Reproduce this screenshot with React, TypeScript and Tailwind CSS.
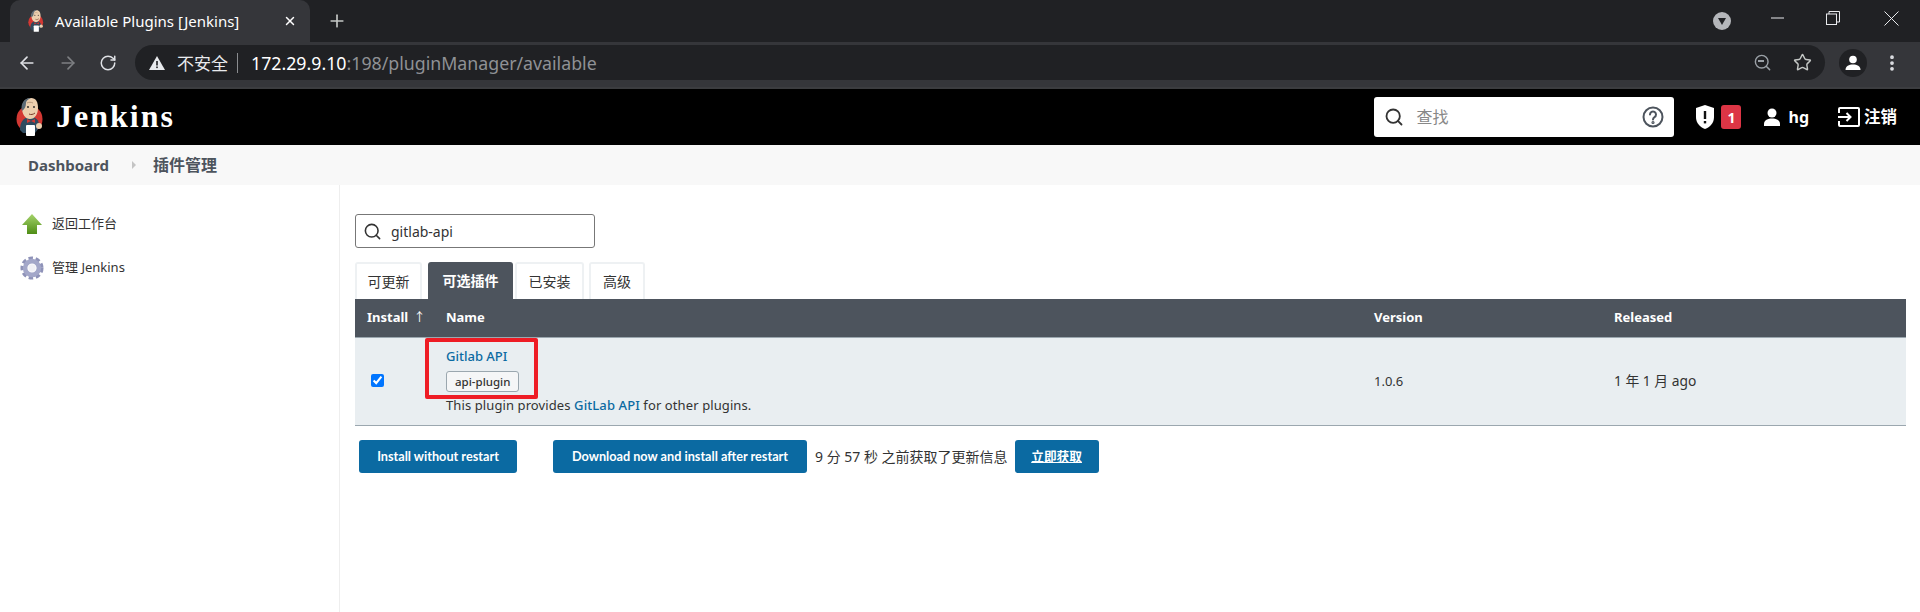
import { ArrowLeft, ArrowRight, RotateCw, Star, Search, X, Plus, EllipsisVertical } from "lucide-react";
import type { ReactNode } from "react";

const cjk = "font-['Noto_Sans','Noto_Sans_CJK_SC',sans-serif]";

function JenkinsLogo({ className = "" }: { className?: string }) {
  return (
    <svg viewBox="0 0 28 38" className={className}>
      <ellipse cx="13.500" cy="21" rx="13" ry="13.500" fill="#d33833" />
      <path d="M4 32c0-8 3-12 9-13s10 3 10 8v3l-4 5H7z" fill="#2f4b5f" />
      <path d="M6 10C6 4 10 0 15 0s7 4 7 10c0 6-3 11-8 11S6 16 6 10z" fill="#eccfae" />
      <path d="M6 13C4 6 9-1 15 0c-3 1-5 3-5 5 0 3-1 6-4 8z" fill="#5d6b76" />
      <path d="M11 5c2-1 4-1 6 0" stroke="#a98a70" strokeWidth="0.800" fill="none" />
      <circle cx="12" cy="9" r="0.900" fill="#222" />
      <circle cx="18" cy="9" r="0.900" fill="#222" />
      <path d="M13 16c2 1 4 .5 6-1" stroke="#7a3b2a" strokeWidth="1" fill="none" />
      <path d="M11 21l4 2 4-2v4l-4-2-4 2z" fill="#d33833" />
      <rect x="10" y="27" width="9" height="11" rx="1" fill="#fff" />
      <circle cx="23" cy="28" r="3" fill="#eccfae" />
    </svg>
  );
}

function BrowserChrome() {
  return (
    <div className={`${cjk} bg-[#202124]`}>
      <div className="h-[42px] flex items-end pl-[10px]">
        <div className="w-[300px] h-[42px] bg-[#35363a] rounded-t-[10px] flex items-center pl-[18px] pr-[13px] text-white">
          <JenkinsLogo className="w-[16px] h-[22px]" />
          <span className="ml-[11px] text-[15px] flex-1 whitespace-nowrap">Available Plugins [Jenkins]</span>
          <X size={14} strokeWidth={2.500} />
        </div>
        <div className="h-[42px] flex items-center ml-[17px]">
          <Plus size={20} strokeWidth={2} className="text-[#c4c7c5]" />
        </div>
        <div className="flex-1" />
        <div className="h-[42px] flex items-center text-[#e8eaed] pr-[6px]">
          <div className="w-[18px] h-[18px] rounded-full bg-[#b4b6ba] flex items-center justify-center mr-[23px]">
            <div className="w-0 h-0 border-l-[4px] border-r-[4px] border-t-[7px] border-l-transparent border-r-transparent border-t-[#202124]" />
          </div>
          <div className="w-[46px] flex justify-center -mt-[7px]">
            <svg width="13" height="2" viewBox="0 0 13 2" fill="none" stroke="currentColor">
              <path d="M0 1h13" />
            </svg>
          </div>
          <div className="w-[46px] flex justify-center ml-[10px] -mt-[6px]">
            <svg width="14" height="14" viewBox="0 0 14 14" fill="none" stroke="currentColor">
              <rect x="0.500" y="3" width="10" height="10.500" />
              <path d="M3 3V0.500h10.500V11H10.500" />
            </svg>
          </div>
          <div className="w-[46px] flex justify-center ml-[12px] -mt-[6px]">
            <svg width="15" height="15" viewBox="0 0 15 15" fill="none" stroke="currentColor">
              <path d="M0.500 0.500l14 14M14.500 0.500l-14 14" />
            </svg>
          </div>
        </div>
      </div>
      <div className="h-[47px] bg-[#35363a] border-b-[2px] border-[#3c3d40] flex items-center text-[#dfe1e5]">
        <div className="w-[135px] flex items-center pl-[17px] gap-[21px] -mt-[4px]">
          <ArrowLeft size={20} />
          <ArrowRight size={20} className="text-[#7d7f82]" />
          <RotateCw size={18} />
        </div>
        <div className="w-[1690px] h-[35px] bg-[#202124] rounded-full flex items-center pl-[14px] pr-[13px] -mt-[4px]">
          <svg width="16" height="14" viewBox="0 0 16 14" className="mr-[12px]">
            <path d="M8 0l8 14H0z" fill="#e8eaed" />
            <rect x="7.200" y="5" width="1.600" height="4.500" fill="#202124" />
            <rect x="7.200" y="10.500" width="1.600" height="1.600" fill="#202124" />
          </svg>
          <span className="text-[17px] text-[#e8eaed] pt-[2px]">不安全</span>
          <span className="w-px h-[20px] bg-[#8a8c8f] ml-[9px] mr-[13px]" />
          <span className="text-[17.750px] text-white pt-[2px]">172.29.9.10</span>
          <span className="text-[17.750px] text-[#8f9195] pt-[2px]">:198/pluginManager/available</span>
          <div className="flex-1" />
          <div className="relative mr-[21px] text-[#9aa0a6]">
            <Search size={19} strokeWidth={1.800} />
            <div className="absolute left-[5px] top-[7px] w-[6px] h-[2px] bg-[#9aa0a6]" />
          </div>
          <Star size={19} strokeWidth={1.800} className="text-[#c4c7c5]" />
        </div>
        <div className="w-[28px] h-[28px] rounded-full bg-[#202124] ml-[14px] flex items-center justify-center -mt-[4px]">
          <svg width="18" height="18" viewBox="0 0 18 18" fill="#fff">
            <circle cx="9" cy="5.500" r="3.800" />
            <path d="M1.500 16c0-4 3.500-5.500 7.500-5.500s7.500 1.500 7.500 5.500z" />
          </svg>
        </div>
        <EllipsisVertical size={20} strokeWidth={2.500} className="ml-[15px] -mt-[4px]" />
      </div>
    </div>
  );
}

function JenkinsHeader() {
  return (
    <header className="h-[56px] bg-black flex items-center pl-[16px] pr-[23px] text-white">
      <JenkinsLogo className="w-[28px] h-[38px]" />
      <span className="ml-[12px] -mt-[2px] font-['Liberation_Serif',serif] font-bold text-[32px] tracking-[2px]">Jenkins</span>
      <div className="flex-1" />
      <div className="w-[300px] h-[40px] bg-white rounded-[3px] flex items-center pl-[10px] pr-[10px] text-[#333]">
        <Search size={20} strokeWidth={2.200} />
        <span className={`${cjk} ml-[12px] flex-1 text-[16px] text-[#888]`}>查找</span>
        <svg width="22" height="22" viewBox="0 0 22 22" fill="none" stroke="#4d545d" strokeWidth="2">
          <circle cx="11" cy="11" r="9.500" />
          <path d="M8 8.500a3 3 0 1 1 4.500 2.600c-1 .6-1.500 1.200-1.500 2.400" strokeLinecap="round" />
          <circle cx="11" cy="16.500" r="0.600" />
        </svg>
      </div>
      <svg width="18" height="24" viewBox="0 0 18 24" className="ml-[22px]">
        <path d="M9 0l9 3v9c0 6-4 10-9 12-5-2-9-6-9-12V3z" fill="#fff" />
        <rect x="7.800" y="6" width="2.400" height="8" fill="#111" />
        <rect x="7.800" y="16" width="2.400" height="2.400" fill="#111" />
      </svg>
      <span className={`${cjk} ml-[7px] w-[20px] h-[24px] bg-[#dc3545] rounded-[3px] flex items-center justify-center text-[14px] font-bold`}>1</span>
      <svg width="18" height="18" viewBox="0 0 18 18" fill="#fff" className="ml-[22px]">
        <circle cx="9" cy="5" r="4.500" />
        <path d="M1 18v-2c0-4 4-5.500 8-5.500s8 1.500 8 5.500v2z" />
      </svg>
      <span className={`${cjk} ml-[7px] text-[16px] font-bold`}>hg</span>
      <svg width="22" height="20" viewBox="0 0 22 20" fill="none" stroke="#fff" strokeWidth="2" className="ml-[29px]">
        <path d="M1 6V2a1 1 0 0 1 1-1h18a1 1 0 0 1 1 1v16a1 1 0 0 1-1 1H2a1 1 0 0 1-1-1v-4" />
        <path d="M0 10h12M8.500 6l4 4-4 4" />
      </svg>
      <span className={`${cjk} ml-[4px] text-[16.500px] font-bold`}>注销</span>
    </header>
  );
}

function Sidebar() {
  return (
    <aside className="w-[340px] shrink-0 border-r border-[#eee] pt-[27px] pl-[20px]">
      <div className="flex items-center h-[24px]">
        <svg width="22" height="24" viewBox="0 0 22 24" className="mr-[9px] ml-[1px]">
          <defs>
            <linearGradient id="up" x1="0" y1="0" x2="0" y2="1">
              <stop offset="0" stopColor="#a5d36b" />
              <stop offset="1" stopColor="#4f8d16" />
            </linearGradient>
          </defs>
          <path d="M11 2l10 11h-5v9H6v-9H1z" fill="url(#up)" />
        </svg>
        <span className="text-[13px] text-[#333]">返回工作台</span>
      </div>
      <div className="flex items-center h-[24px] mt-[20px]">
        <svg width="24" height="26" viewBox="0 0 26 28" className="mr-[8px]">
          <circle cx="13" cy="14" r="9" fill="none" stroke="#8e92b8" strokeWidth="7" strokeDasharray="4 2.500" />
          <circle cx="13" cy="14" r="7.500" fill="none" stroke="#a3a7c9" strokeWidth="5" />
          <circle cx="13" cy="14" r="4" fill="#f1f1f6" />
        </svg>
        <span className="text-[13px] text-[#333]">管理 Jenkins</span>
      </div>
    </aside>
  );
}

function Tab({ label, active = false, width }: { label: string; active?: boolean; width: string }) {
  return (
    <div
      className={`${width} h-[37px] flex items-center justify-center rounded-t-[3px] text-[14px] ${
        active ? "bg-[#4d545d] text-white font-semibold" : "border-[2px] border-b-0 border-[#eef1f3] text-[#333]"
      }`}
    >
      {label}
    </div>
  );
}

function BlueButton({ children, className = "" }: { children: ReactNode; className?: string }) {
  return (
    <button className={`h-[33px] bg-[#0b6aa2] rounded-[3px] text-white text-[12.700px] font-bold font-['Lato','Noto_Sans_CJK_SC',sans-serif] ${className}`}>
      {children}
    </button>
  );
}

function Content() {
  return (
    <main className="flex-1 pt-[29px] pl-[15px] pr-[14px]">
      <div className="w-[240px] h-[34px] border border-[#777] rounded-[3px] flex items-center pl-[7px] text-[#333]">
        <Search size={19} strokeWidth={2} />
        <span className="ml-[9px] text-[14px]">gitlab-api</span>
      </div>

      <div className="flex mt-[14px]">
        <Tab label="可更新" width="w-[67px]" />
        <div className="w-[6px]" />
        <Tab label="可选插件" active width="w-[85px]" />
        <div className="w-[2px]" />
        <Tab label="已安装" width="w-[69px]" />
        <div className="w-[5px]" />
        <Tab label="高级" width="w-[56px]" />
      </div>

      <div className="h-[39px] bg-[#4d545d] border-b border-[#9ba7af] flex items-center text-white text-[13px] font-bold">
        <div className="w-[91px] pl-[12px]">
          Install <span className="font-normal ml-[2px] text-[12px]">↑</span>
        </div>
        <div className="w-[928px]">Name</div>
        <div className="w-[240px]">Version</div>
        <div>Released</div>
      </div>

      <div className="h-[88px] bg-[#e9eef1] border-b border-[#9ba7af] flex items-center text-[13px] text-[#333]">
        <div className="w-[91px] pl-[16px] flex items-center -mt-[2px]">
          <input type="checkbox" checked readOnly className="w-[13px] h-[13px] accent-[#0075ff]" />
        </div>
        <div className="w-[928px] relative">
          <a className="block text-[#0b6aa2] font-medium leading-[18px] -mt-[3px]">Gitlab API</a>
          <span className="inline-block mt-[6px] h-[21px] px-[8px] border border-[#9ba7af] bg-[#f5f6f7] rounded-[3px] text-[11.500px] font-medium leading-[19px]">
            api-plugin
          </span>
          <p className="mt-[4px] leading-[18px] tracking-[0.100px]">
            This plugin provides <a className="text-[#0b6aa2] font-medium">GitLab API</a> for other plugins.
          </p>
          <div className="absolute left-[-21px] top-[-12px] w-[113px] h-[61px] border-[4px] border-[#ee1c25] rounded-[2px]" />
        </div>
        <div className="w-[240px]">1.0.6</div>
        <div className="text-[13.800px]">1 年 1 月 ago</div>
      </div>

      <div className="flex items-center mt-[14px] pl-[4px]">
        <BlueButton className="w-[158px]">Install without restart</BlueButton>
        <BlueButton className="w-[254px] ml-[36px]">Download now and install after restart</BlueButton>
        <span className="ml-[8px] text-[14px] text-[#333]">9 分 57 秒 之前获取了更新信息</span>
        <BlueButton className="w-[84px] ml-[7px] underline">立即获取</BlueButton>
      </div>
    </main>
  );
}

export default function App() {
  return (
    <div className={`${cjk} w-[1920px] h-[612px] overflow-hidden bg-white flex flex-col`}>
      <BrowserChrome />
      <JenkinsHeader />
      <nav className="h-[40px] shrink-0 bg-[#f8f8f8] flex items-center pl-[28px] text-[#4d545d]">
        <span className="text-[15px] font-bold">Dashboard</span>
        <span className="ml-[23px] w-0 h-0 border-y-[4px] border-l-[4px] border-y-transparent border-l-[#c4c4c4]" />
        <span className="ml-[17px] text-[16px] font-semibold">插件管理</span>
      </nav>
      <div className="flex flex-1">
        <Sidebar />
        <Content />
      </div>
    </div>
  );
}
